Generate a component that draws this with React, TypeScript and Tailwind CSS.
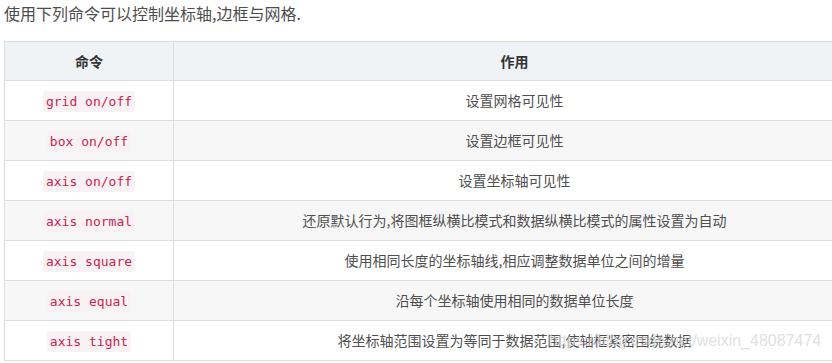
const rows: [string, string][] = [
  ["grid on/off", "设置网格可见性"],
  ["box on/off", "设置边框可见性"],
  ["axis on/off", "设置坐标轴可见性"],
  ["axis normal", "还原默认行为,将图框纵横比模式和数据纵横比模式的属性设置为自动"],
  ["axis square", "使用相同长度的坐标轴线,相应调整数据单位之间的增量"],
  ["axis equal", "沿每个坐标轴使用相同的数据单位长度"],
  ["axis tight", "将坐标轴范围设置为等同于数据范围,使轴框紧密围绕数据"],
];

export default function App() {
  return (
    <div
      className="relative w-[832px] h-[363px] overflow-hidden bg-white pl-[4px] text-[#4d4d4d]"
      style={{ fontFamily: '"Noto Sans CJK SC", "Noto Sans", sans-serif' }}
    >
      <p className="text-[16px] leading-[26px] text-[#4d4d4d]">
        使用下列命令可以控制坐标轴,边框与网格.
      </p>

      <table className="mt-[15px] w-[852px] border-collapse text-[14px] table-fixed">
        <colgroup>
          <col className="w-[169px]" />
          <col />
        </colgroup>
        <thead>
          <tr className="bg-[#eff3f5] h-[39px]">
            <th className="border border-[#dddddd] font-bold text-[#333333] text-center">命令</th>
            <th className="border border-[#dddddd] font-bold text-[#333333] text-center">作用</th>
          </tr>
        </thead>
        <tbody>
          {rows.map(([cmd, desc], i) => (
            <tr key={cmd} className={`h-[40px] ${i % 2 === 1 ? "bg-[#f7f7f7]" : "bg-white"}`}>
              <td className="border border-[#dddddd] text-center">
                <code
                  className="inline-block rounded-[3px] bg-[#f9f2f4] px-[3px] py-[2px] text-[13px] leading-[17px] text-[#c7254e]"
                  style={{ fontFamily: '"DejaVu Sans Mono", monospace' }}
                >
                  {cmd}
                </code>
              </td>
              <td className="border border-[#dddddd] text-center text-[#4f4f4f]">{desc}</td>
            </tr>
          ))}
        </tbody>
      </table>

      <div
        className="absolute left-[549px] top-[331px] text-[16px] leading-[20px] text-[#d8d8d8]/80 pointer-events-none"
        style={{ fontFamily: '"Liberation Sans", Arial, sans-serif' }}
      >
        https://blog.csdn.net/weixin_48087474
      </div>
    </div>
  );
}
